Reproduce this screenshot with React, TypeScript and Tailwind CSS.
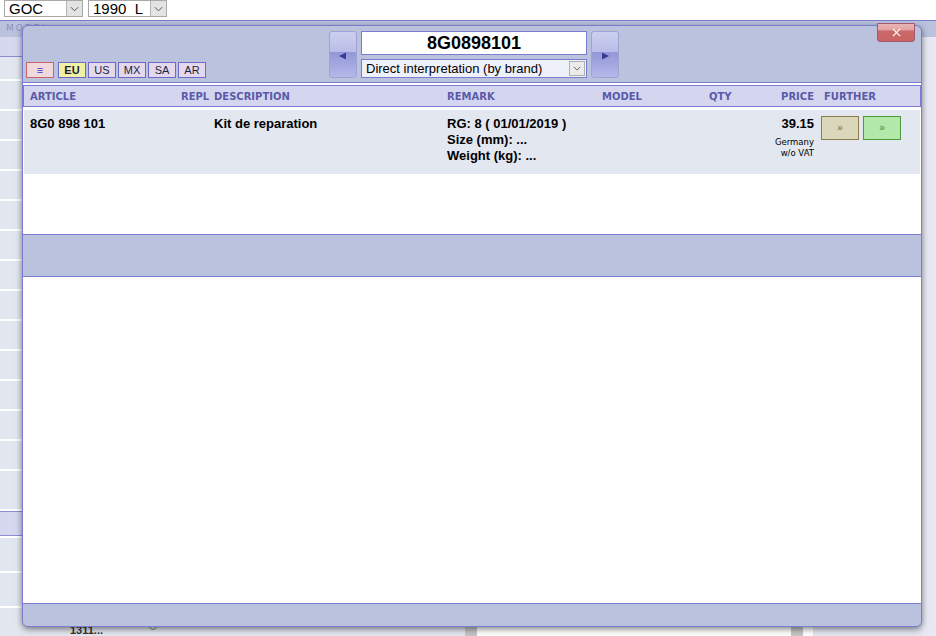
import React from "react";

type Lang = { code: string; active?: boolean };

const langs: Lang[] = [
  { code: "EU", active: true },
  { code: "US" },
  { code: "MX" },
  { code: "SA" },
  { code: "AR" },
];

const headCols = "grid grid-cols-[151px_33px_233px_155px_107px_55px_50px_106px] pl-[6px]";

function Chevron({ className = "" }: { className?: string }) {
  return (
    <svg viewBox="0 0 10 6" className={className} fill="none" stroke="#555" strokeWidth="1.1">
      <polyline points="1,1 5,5 9,1" />
    </svg>
  );
}

function TopSelect({ label, width }: { label: string; width: string }) {
  return (
    <div className={`flex h-[17px] border border-[#a9a9a9] bg-white ${width}`}>
      <span className="flex-1 whitespace-pre pl-[4px] text-[15px] leading-[15px] text-black">{label}</span>
      <span className="flex w-[16px] items-center justify-center border-l border-[#b5b5b5] bg-[#e3e3e3]">
        <Chevron className="h-[6px] w-[9px]" />
      </span>
    </div>
  );
}

function NavArrow({ dir }: { dir: "left" | "right" }) {
  return (
    <button
      type="button"
      className="flex h-[47px] w-[28px] items-center justify-center rounded-[3px] border border-[#9ea2d4] bg-[linear-gradient(to_bottom,#ccd0ee_0%,#b9bde8_44%,#9397d8_45%,#b4b8e8_100%)]"
    >
      <svg viewBox="0 0 10 8" className="mt-[3px] h-[8px] w-[10px]">
        {dir === "left" ? (
          <polygon points="1,4 8,0.5 8,7.5" fill="#3a3c92" />
        ) : (
          <polygon points="9,4 2,0.5 2,7.5" fill="#3a3c92" />
        )}
      </svg>
    </button>
  );
}

// left-hand list rows of the page behind the lookup window
function BackRows() {
  const rows = Array.from({ length: 13 });
  return (
    <div className="w-[922px]">
      <div className="h-[20px] border-b border-[#8a8ed0] bg-[#d6d8f0]" />
      <div className="h-[24px] border-b-2 border-white bg-[#e2e6ef]" />
      {rows.map((_, i) => (
        <div key={i} className="h-[30px] border-b-2 border-white bg-[#e2e6ef]" />
      ))}
      <div className="h-[40px] border-b-2 border-white bg-[#e2e6ef]" />
      <div className="h-[25px] border-y border-[#8a8ed0] bg-[#d6d8f0]" />
      <div className="h-[37px] border-y-2 border-white bg-[#e2e6ef]" />
      <div className="h-[35px] border-b-2 border-white bg-[#e2e6ef]" />
      <div className="flex h-[40px] bg-[#e2e6ef]">
        <span className="ml-[70px] mt-[14px] text-[11px] font-bold text-[#333]">1311...</span>
        <span className="ml-[46px] mt-[14px] h-[8px] w-[8px] rounded-full border border-[#5a9a5a]" />
        <div className="ml-[308px] w-[12px] bg-[#c4c4c4]" />
        <div className="w-[314px] bg-white pt-[6px]">
          <div className="mx-[6px] h-[3px] bg-[#d8dcee]" />
        </div>
        <div className="w-[12px] bg-[#c4c4c4]" />
        <div className="w-[10px] bg-white" />
      </div>
    </div>
  );
}

export default function App() {
  return (
    <div className="relative h-[636px] w-[936px] overflow-hidden bg-[#e8e8f4] font-['Liberation_Sans',Arial,sans-serif]">
      {/* filter bar */}
      <div className="flex h-[20px] items-start gap-[5px] bg-white pl-[4px]">
        <TopSelect label="GOC" width="w-[79px]" />
        <TopSelect label="1990  L" width="w-[79px]" />
      </div>
      <div className="flex h-[17px] items-center border-t border-[#7b7bcf] bg-[#bac2de] pl-[6px] font-['DejaVu_Sans',Verdana,sans-serif] text-[9px] tracking-[2px] text-[#8d91c4]">
        MODEL
      </div>
      <BackRows />

      {/* lookup window */}
      <div className="absolute left-[22px] top-[25px] flex h-[602px] w-[900px] flex-col rounded-[6px] border border-[#7b7bcf] bg-[#bac2de] shadow-[0_2px_6px_rgba(0,0,0,0.5)]">
        <div className="relative flex h-[57px] shrink-0 border-b border-[#7b7bcf]">
          <div className="flex w-[306px] items-end pb-[4px] pl-[3px]">
            <button
              type="button"
              className="mr-[2px] h-[16px] w-[28px] border border-[#c8646a] bg-[#f0d8dc] text-[11px] leading-[14px] text-[#3c3cc8]"
            >
              ≡
            </button>
            {langs.map((l) => (
              <button
                key={l.code}
                type="button"
                className={
                  l.active
                    ? "ml-[2px] h-[16px] w-[28px] border border-[#6a6acb] bg-[#f2f0a2] text-[11px] font-bold leading-[14px] text-[#1e1e3c]"
                    : "ml-[2px] h-[16px] w-[28px] border border-[#6a6acb] bg-[#e4d8ec] text-[11px] leading-[14px] text-[#1e1e3c]"
                }
              >
                {l.code}
              </button>
            ))}
          </div>
          <div className="mt-[5px] flex gap-[4px]">
            <NavArrow dir="left" />
            <div className="flex w-[226px] flex-col gap-[4px]">
              <div className="flex h-[24px] items-center justify-center border border-[#7b7bcf] bg-white text-[18px] font-bold text-black">
                8G0898101
              </div>
              <div className="flex h-[19px] border border-[#7b7bcf] bg-[#eef0fa]">
                <span className="flex-1 pl-[4px] text-[13px] leading-[17px] text-black">
                  Direct interpretation (by brand)
                </span>
                <span className="m-[1px] flex w-[16px] items-center justify-center border border-[#b0b0b0] bg-[#ebebeb]">
                  <Chevron className="h-[5px] w-[8px]" />
                </span>
              </div>
            </div>
            <NavArrow dir="right" />
          </div>
          <button
            type="button"
            aria-label="Close"
            className="absolute -top-[3px] right-[6px] flex h-[19px] w-[38px] items-center justify-center rounded-b-[3px] border border-[#a05a6a] bg-[linear-gradient(to_bottom,#eab4b4_0%,#e2a4a4_35%,#cc6a6a_40%,#c86464_100%)]"
          >
            <svg viewBox="0 0 10 10" className="h-[9px] w-[9px]" stroke="#fff" strokeWidth="1.3">
              <line x1="1" y1="1" x2="9" y2="9" />
              <line x1="9" y1="1" x2="1" y2="9" />
            </svg>
          </button>
        </div>

        <div className="flex flex-1 flex-col bg-white">
          <div
            className={`${headCols} mt-[2px] h-[22px] items-center border border-[#7b7bcf] bg-[#d4d6f0] pt-[1px] font-['DejaVu_Sans',Verdana,sans-serif] text-[10px] font-bold text-[#5a5aa8]`}
          >
            <span>ARTICLE</span>
            <span>REPL</span>
            <span>DESCRIPTION</span>
            <span>REMARK</span>
            <span>MODEL</span>
            <span>QTY</span>
            <span className="text-right">PRICE</span>
            <span className="pl-[10px]">FURTHER</span>
          </div>

          <div className={`${headCols} mx-[1px] mt-[3px] h-[64px] bg-[#e3e7f0] pl-[5px] pt-[6px] text-[13px] font-bold leading-[16px] text-black`}>
            <span>8G0 898 101</span>
            <span />
            <span>Kit de reparation</span>
            <div className="flex flex-col">
              <span>RG: 8 ( 01/01/2019 )</span>
              <span>Size (mm): ...</span>
              <span>Weight (kg): ...</span>
            </div>
            <span />
            <span />
            <div className="flex flex-col items-end">
              <span>39.15</span>
              <span className="mt-[5px] font-['DejaVu_Sans',Verdana,sans-serif] text-[8.5px] font-normal leading-[11px]">
                Germany
              </span>
              <span className="font-['DejaVu_Sans',Verdana,sans-serif] text-[8.5px] font-normal leading-[11px]">
                w/o VAT
              </span>
            </div>
            <div className="-mt-[1px] flex gap-[4px] pl-[7px] pt-[1px]">
              <button
                type="button"
                className="h-[24px] w-[38px] border border-[#8a7a4c] bg-[#dbd7bb] text-[10px] font-normal text-[#7a6a3a]"
              >
                »
              </button>
              <button
                type="button"
                className="h-[24px] w-[38px] border border-[#4c9a3c] bg-[#b2e8aa] text-[10px] font-normal text-[#3a8a32]"
              >
                »
              </button>
            </div>
          </div>

          <div className="h-[60px]" />
          <div className="h-[43px] border-y border-[#7b7bcf] bg-[#bac2de]" />
          <div className="flex-1" />
        </div>

        <div className="h-[23px] shrink-0 rounded-b-[5px] border-t border-[#7b7bcf] bg-[#bac2de]" />
      </div>
    </div>
  );
}
